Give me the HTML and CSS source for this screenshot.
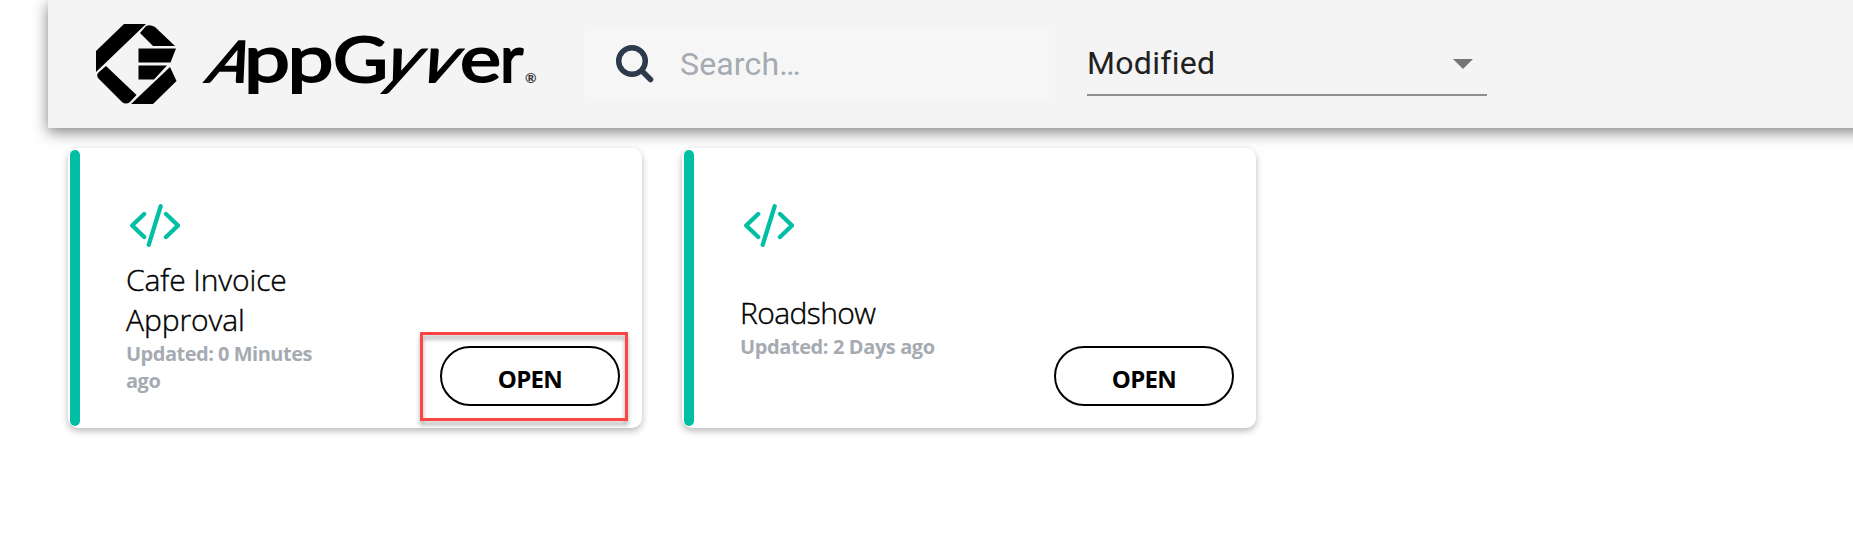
FILE: index.html
```html
<!DOCTYPE html>
<html lang="en">
<head>
<meta charset="utf-8">
<title>AppGyver</title>
<link rel="stylesheet" href="styles.css">
</head>
<body>
<header class="topbar">
  <svg class="logo" width="444" height="80" viewBox="0 0 444 80" role="img" aria-label="AppGyver">
    <path d="M28 0H50L0 48V27Z"/>
    <path d="M50 2Q54 0 59 3L79 22H57L44 9Z"/>
    <path d="M42.500 24.500H80L74.500 38.500H42.500Z"/>
    <path d="M42.500 41.500H71L58 55.500H42.500Z"/>
    <path d="M74 43L80.500 57L57 80H35Z"/>
    <path d="M10 42L40.500 71L34 78Q30 81 26 78L2 54Q0 50 3 48Z"/>
    <text class="wordmark cap" transform="translate(108 57.500) skewX(-24)">A</text>
    <text class="wordmark" y="58" x="148" textLength="46" lengthAdjust="spacingAndGlyphs">p</text>
    <text class="wordmark" y="58" x="191.500" textLength="46" lengthAdjust="spacingAndGlyphs">p</text>
    <text class="wordmark round" y="57.500" x="237" textLength="55" lengthAdjust="spacingAndGlyphs">G</text>
    <text class="wordmark" transform="translate(283 57.500) skewX(-25)">y</text>
    <text class="wordmark" transform="translate(320 57.500) skewX(-25)">v</text>
    <text class="wordmark" y="58" x="364" textLength="41" lengthAdjust="spacingAndGlyphs">e</text>
    <text class="wordmark" y="57.500" x="404">r</text>
    <text class="mark" y="59" x="429">®</text>
  </svg>
  <div class="search">
    <svg class="search-icon" width="40" height="40" viewBox="0 0 40 40">
      <circle cx="17" cy="17" r="13.300"/><path d="M27 27L35.500 35.500"/>
    </svg>
    <span class="placeholder">Search…</span>
  </div>
  <div class="select">
    <span class="value">Modified</span>
    <svg class="arrow" width="20" height="10" viewBox="0 0 20 10"><path class="caret" d="M0 0H20L10 10Z"/></svg>
  </div>
</header>
<main class="cards">
  <article class="card">
    <div class="accent"></div>
    <div class="info">
      <svg class="code" width="50" height="43" viewBox="0 0 50 43"><path d="M14.200 10L2.200 21.500L14.200 33M36 10L48 21.500L36 33M30.700 2.200L18.700 40.800"/></svg>
      <h2 class="title">Cafe Invoice<br>Approval</h2>
      <p class="updated">Updated: 0 Minutes<br>ago</p>
    </div>
    <div class="action">
      <button class="open">OPEN</button>
      <div class="highlight"></div>
    </div>
  </article>
  <article class="card">
    <div class="accent"></div>
    <div class="info info-short">
      <svg class="code" width="50" height="43" viewBox="0 0 50 43"><path d="M14.200 10L2.200 21.500L14.200 33M36 10L48 21.500L36 33M30.700 2.200L18.700 40.800"/></svg>
      <h2 class="title">Roadshow</h2>
      <p class="updated">Updated: 2 Days ago</p>
    </div>
    <div class="action">
      <button class="open">OPEN</button>
    </div>
  </article>
</main>
</body>
</html>
```
FILE: styles.css
```css
* { box-sizing: border-box; }
body { margin: 0; height: 543px; background: #fff; overflow: hidden; font-family: "Open Sans", "Noto Sans", sans-serif; }
.topbar { margin-left: 48px; margin-right: -20px; height: 128px; padding-left: 48px; display: flex; align-items: center; background: #f4f4f4; box-shadow: 0 4px 14px rgba(0,0,0,.5); }
.logo { flex: none; overflow: visible; }
.wordmark { font-family: Lato, sans-serif; font-size: 64px; font-weight: 400; stroke: #000; stroke-width: 2px; }
.cap { font-size: 57px; }
.round { font-size: 61px; }
.mark { font-family: Lato, sans-serif; font-size: 14px; font-weight: 700; fill: #333; }
.search { margin-left: 44px; width: 471px; height: 70px; padding-left: 31px; display: flex; align-items: center; border-radius: 8px; background: #f6f6f6; }
.search-icon { fill: none; stroke: #2d3a4b; stroke-width: 5.500; stroke-linecap: round; }
.placeholder { margin-left: 25px; font: 400 32px/40px Roboto, sans-serif; letter-spacing: .15px; color: #a5aab1; }
.select { margin-left: 32px; width: 400px; height: 64px; padding: 0 14px 0 0; display: flex; align-items: center; justify-content: space-between; border-bottom: 2px solid #8e8e8e; }
.value { font: 400 32px/40px Roboto, sans-serif; letter-spacing: .3px; color: #212121; }
.arrow { margin-top: 2px; }
.caret { fill: #757575; }
.cards { padding: 20px 0 0 68px; display: flex; gap: 40px; }
.card { width: 574px; height: 280px; padding: 2px; display: flex; border-radius: 10px; background: #fff; box-shadow: 0 3px 7px rgba(0,0,0,.28); }
.accent { width: 10px; border-radius: 5px; background: #00bfa5; }
.info { width: 240px; padding: 54px 0 0 46px; }
.code { display: block; margin-left: 4px; fill: none; stroke: #00bfa5; stroke-width: 4.300; stroke-linecap: round; stroke-linejoin: round; }
.title { margin: 13px 0 0; font-size: 30px; font-weight: 300; line-height: 40px; letter-spacing: -.1px; color: #000; white-space: nowrap; -webkit-text-stroke: .4px #000; }
.updated { margin: 0; font-size: 20px; font-weight: 700; line-height: 27px; letter-spacing: -.5px; color: #a6abb2; white-space: nowrap; }
.info-short .title { margin-top: 46px; letter-spacing: -.6px; }
.info-short .updated { letter-spacing: -.4px; }
.action { position: relative; margin: 196px 0 0 120px; width: 180px; height: 60px; }
.open { width: 180px; height: 60px; padding: 6px 0 0; border: 2px solid #000; border-radius: 30px; background: transparent; font: 700 24px/32px "Open Sans", sans-serif; letter-spacing: -.7px; color: #000; }
.highlight { position: absolute; left: -20px; top: -14px; width: 208px; height: 89px; border: 3px solid #ff4444; filter: drop-shadow(0 4px 2px rgba(0,0,0,.35)); }
```
